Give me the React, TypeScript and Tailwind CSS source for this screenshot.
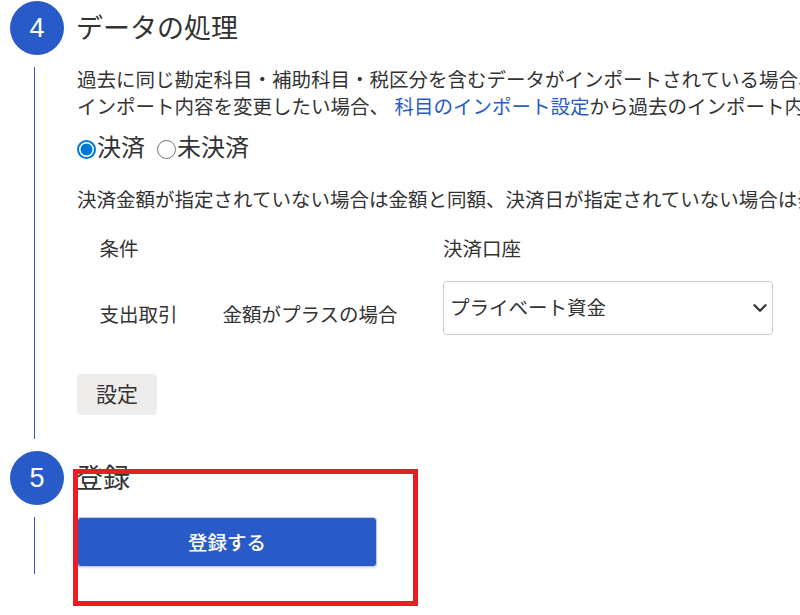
import React, { useState } from 'react';
import { ChevronDown } from 'lucide-react';

interface StepProps {
  number: number;
  title: string;
  lineClass: string;
  children: React.ReactNode;
}

function Step({ number, title, lineClass, children }: StepProps) {
  return (
    <section className="flex gap-[13px] pl-[10px]">
      <div className="flex w-[54px] shrink-0 flex-col">
        <div className="flex h-[54px] items-center justify-center rounded-full bg-[#285bc8] font-['Liberation_Sans','Noto_Sans_CJK_JP',sans-serif] text-[27px] text-white">
          {number}
        </div>
        <div className={`mt-3 ml-6 w-px bg-[#285bc8] ${lineClass}`} />
      </div>
      <div className="w-[1100px] shrink-0">
        <h2 className="-ml-px h-[54px] text-[27px] leading-[52px]">{title}</h2>
        {children}
      </div>
    </section>
  );
}

const settlementOptions = [
  { value: 'settled', label: '決済' },
  { value: 'unsettled', label: '未決済' },
];

export default function App() {
  const [settlement, setSettlement] = useState('settled');

  return (
    <main className="relative h-[615px] w-[800px] overflow-hidden bg-white pt-px font-['Noto_Sans_CJK_JP',sans-serif] text-[19.5px] leading-[27px] text-[#333]">
      <Step number={4} title="データの処理" lineClass="h-[372px]">
        <p className="mt-[10px] whitespace-nowrap">
          過去に同じ勘定科目・補助科目・税区分を含むデータがインポートされている場合、
          <br />
          インポート内容を変更したい場合、{' '}
          <a href="#" className="ml-px text-[#285bc8]">科目のインポート設定</a>
          から過去のインポート内容
        </p>
        <div className="mt-[9px] flex h-[34px] items-center gap-3 text-[24px]">
          {settlementOptions.map(option => (
            <label key={option.value} className="flex items-center">
              <input
                type="radio"
                name="settlement"
                checked={settlement === option.value}
                onChange={() => setSettlement(option.value)}
                className={`mt-[9px] mr-px h-[19px] w-[19px] appearance-none rounded-full bg-white ${
                  settlement === option.value
                    ? 'border-2 border-[#0078d7] bg-[radial-gradient(circle,#0078d7_5.6px,white_6.3px)] bg-origin-border'
                    : 'border-[1.5px] border-[#767676]'
                }`}
              />
              {option.label}
            </label>
          ))}
        </div>
        <p className="mt-[23px] whitespace-nowrap">
          決済金額が指定されていない場合は金額と同額、決済日が指定されていない場合は発生日
        </p>
        <div className="mt-[22px] grid grid-cols-[123px_220.5px_330px] gap-y-5 pl-[22.5px]">
          <span className="col-span-2">条件</span>
          <span>決済口座</span>
          <span className="pt-[19px]">支出取引</span>
          <span className="pt-[19px]">金額がプラスの場合</span>
          <button className="flex h-[54px] items-center justify-between rounded-[4px] border border-[#ccc] pr-px pl-1.5">
            <span className="pb-[3px]">プライベート資金</span>
            <ChevronDown className="h-[22px] w-[22px]" strokeWidth={2.5} />
          </button>
        </div>
        <button className="mt-[39px] flex h-[41px] w-20 items-center justify-center rounded-[4px] bg-[#efedec] pb-0.5 text-[21px]">
          設定
        </button>
      </Step>
      <div className="h-3" />
      <Step number={5} title="登録" lineClass="h-[57px]">
        <button className="mt-3 flex h-[50px] w-[300px] items-center justify-center rounded-[4px] border border-[#c5c9d3] bg-[#285bc8] pb-0.5 font-medium text-white shadow-sm">
          登録する
        </button>
      </Step>
      {/* highlight frame over the submit step */}
      <div className="pointer-events-none absolute top-[469px] left-[73px] h-[137px] w-[345px] border-5 border-[#ed1c24]" />
    </main>
  );
}
